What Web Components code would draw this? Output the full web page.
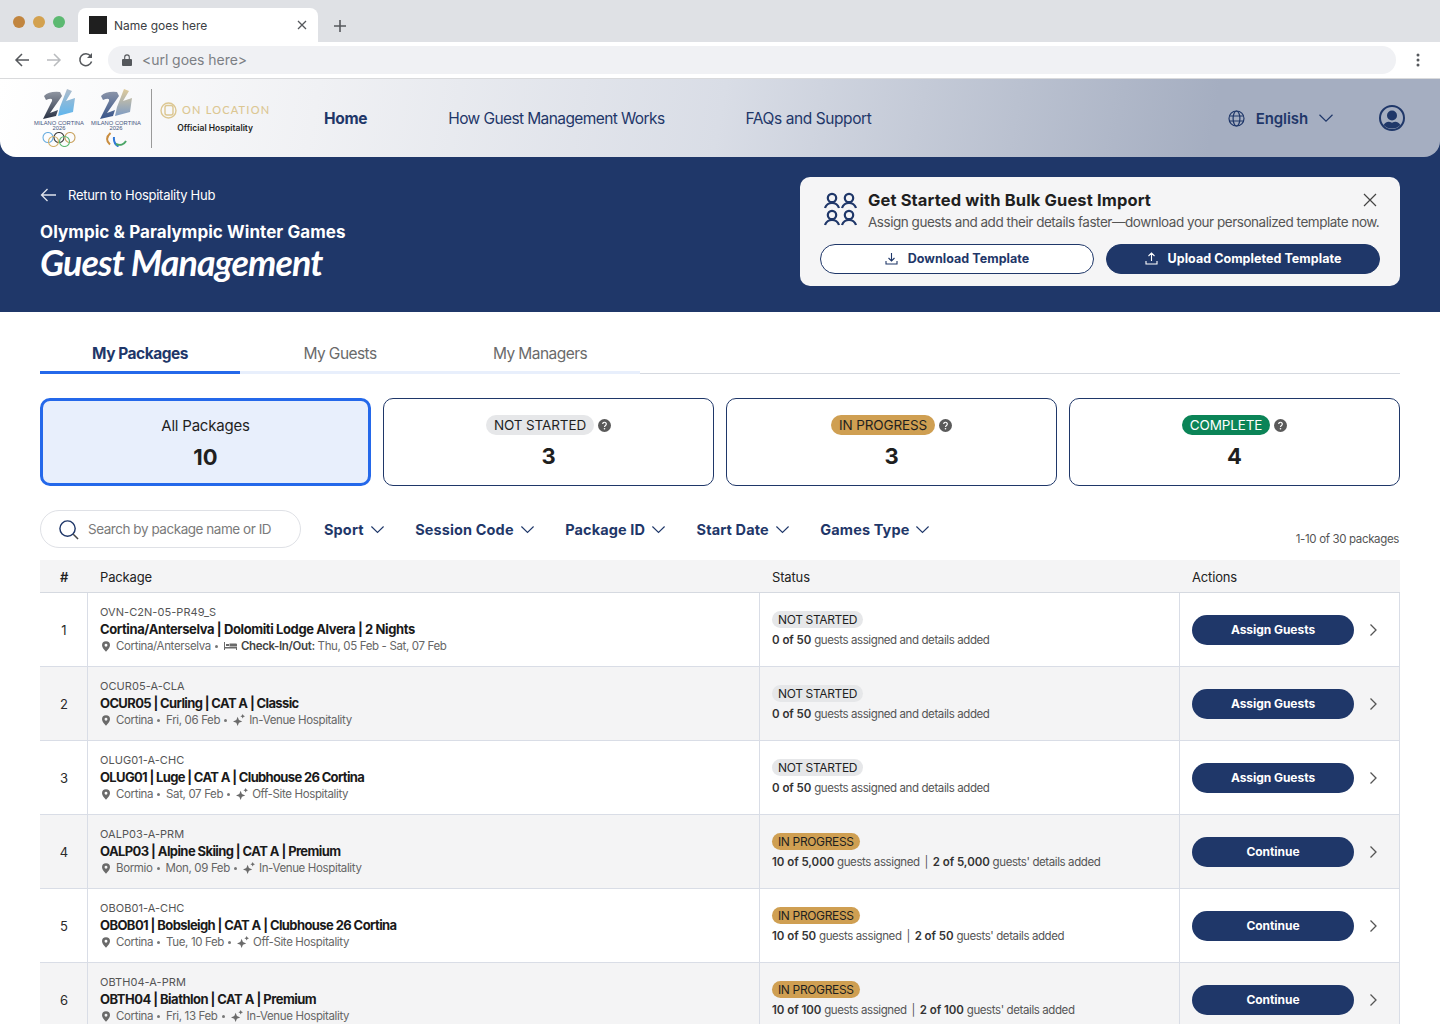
<!DOCTYPE html>
<html>
<head>
<meta charset="utf-8">
<title>Guest Management</title>
<style>
  html, body { margin: 0; height: 1024px; overflow: hidden; background: #fff; }
  body { font-family: Inter, "Liberation Sans", sans-serif; color: #1f1f1f; }
  main { display: block; padding: 0 40px; }
</style>
</head>
<body>
<browser-chrome></browser-chrome>
<site-nav></site-nav>
<hero-banner></hero-banner>
<main>
  <package-tabs></package-tabs>
  <div id="cards" style="display:grid;grid-template-columns:repeat(4,1fr);gap:12px;margin-top:24px">
    <status-card selected label="All Packages" count="10"></status-card>
    <status-card label="NOT STARTED" count="3" kind="none"></status-card>
    <status-card label="IN PROGRESS" count="3" kind="prog"></status-card>
    <status-card label="COMPLETE" count="4" kind="done"></status-card>
  </div>
  <filter-bar></filter-bar>
  <package-table></package-table>
</main>

<script>
const chevron = (w, color) => `<svg width="${w}" height="${w}" viewBox="0 0 16 16" fill="none" stroke="${color}" stroke-width="1.2"><path d="M1.5 4.8 8 11.2l6.5-6.4"/></svg>`;

class BrowserChrome extends HTMLElement {
  constructor() {
    super();
    this.attachShadow({mode: 'open'}).innerHTML = `
      <style>
        :host { display: block; font-family: Inter, sans-serif; }
        .strip { height: 42px; background: #dfe1e5; display: flex; align-items: flex-end; padding-left: 13px; }
        .dots { display: flex; gap: 8px; align-self: flex-start; margin-top: 16px; }
        .dots i { width: 12px; height: 12px; border-radius: 50%; display: block; }
        .tab { width: 240px; height: 34px; margin-left: 13px; background: #fff; border-radius: 8px 8px 0 0; display: flex; align-items: center; padding: 0 11px; box-sizing: border-box; font-size: 12px; color: #3c4043; }
        .fav { width: 18px; height: 18px; background: #1f1f1f; margin-right: 7px; }
        .tab span { flex: 1; }
        .plus { margin: 0 0 10px 16px; }
        .bar { height: 36px; display: flex; align-items: center; padding-left: 14px; border-bottom: 1px solid #d9dadc; background: #fff; }
        .bar svg { display: block; }
        .nav { display: flex; gap: 16px; width: 94px; }
        .url { width: 1288px; height: 28px; background: #f0f1f4; border-radius: 14px; display: flex; align-items: center; padding: 0 0 1px 14px; box-sizing: border-box; font-size: 14px; color: #7c7f84; gap: 10px; letter-spacing: -.05px; }
        .more { margin-left: 20px; }
      </style>
      <div class="strip">
        <div class="dots"><i style="background:#c1853f"></i><i style="background:#d3a14f"></i><i style="background:#5cb971"></i></div>
        <div class="tab"><div class="fav"></div><span>Name goes here</span>
          <svg width="10" height="10" viewBox="0 0 10 10" stroke="#55585c" stroke-width="1.3"><path d="M1 1l8 8M9 1 1 9"/></svg></div>
        <svg class="plus" width="12" height="12" viewBox="0 0 12 12" stroke="#55585c" stroke-width="1.6"><path d="M6 0v12M0 6h12"/></svg>
      </div>
      <div class="bar">
        <div class="nav">
          <svg width="16" height="16" viewBox="0 0 16 16" fill="none" stroke="#55585c" stroke-width="1.5"><path d="M15 8H2M8 2 2 8l6 6"/></svg>
          <svg width="16" height="16" viewBox="0 0 16 16" fill="none" stroke="#b9bbbe" stroke-width="1.5"><path d="M1 8h13M8 2l6 6-6 6"/></svg>
          <svg width="16" height="16" viewBox="0 0 16 16" fill="none" stroke="#55585c" stroke-width="1.5"><path d="M13.6 9.6A6 6 0 1 1 12.6 4"/><path d="M14 1v5H9z" fill="#55585c" stroke="none"/></svg>
        </div>
        <div class="url">
          <svg width="10" height="12" viewBox="0 0 10 12"><path d="M1 5h8a1 1 0 0 1 1 1v5a1 1 0 0 1-1 1H1a1 1 0 0 1-1-1V6a1 1 0 0 1 1-1z" fill="#55585c"/><path d="M2.7 5V3.200a2.300 2.300 0 0 1 4.600 0V5" fill="none" stroke="#55585c" stroke-width="1.100"/></svg>
          <span>&lt;url goes here&gt;</span>
        </div>
        <svg class="more" width="4" height="14" viewBox="0 0 4 14" fill="#55585c"><circle cx="2" cy="2" r="1.5"/><circle cx="2" cy="7" r="1.5"/><circle cx="2" cy="12" r="1.5"/></svg>
      </div>`;
  }
}
customElements.define('browser-chrome', BrowserChrome);

class GamesLogo extends HTMLElement {
  constructor() {
    super();
    const para = this.hasAttribute('para');
    const id = para ? 'p' : 'o';
    const grad = para
      ? [['#8a94a8', '#37548a'], ['#dfcb9b', '#7f9cc4']]
      : [['#8f95a1', '#2a3345'], ['#aebccb', '#5fb6ee']];
    const mark = para
      ? `<svg width="22" height="15" viewBox="0 0 22 15" fill="none" stroke-width="2"><path d="M5.500 1C1 5 1 9 5 12.500" stroke="#c98d3f"/><path d="M9 5c-.5 4 1 7.500 4.500 9.500" stroke="#2f78d8"/><path d="M11 12c4 1.800 8 .5 10-3" stroke="#4aa566"/></svg>`
      : `<svg width="34" height="15" viewBox="0 0 34 15" fill="none" stroke-width="1.100"><circle cx="6" cy="5.500" r="5" stroke="#6aaee0"/><circle cx="17" cy="5.500" r="5" stroke="#3a3a3a"/><circle cx="28" cy="5.500" r="5" stroke="#c9a35f"/><circle cx="11.500" cy="9.500" r="5" stroke="#d4b26b"/><circle cx="22.500" cy="9.500" r="5" stroke="#5cb971"/></svg>`;
    this.attachShadow({mode: 'open'}).innerHTML = `
      <style>
        :host { display: flex; flex-direction: column; align-items: center; width: 54px; }
        svg { display: block; }
        .name { font: 500 5.800px/4.800px "Liberation Sans", sans-serif; color: #46557d; white-space: nowrap; text-align: center; margin: 2px 0; height: 9px; }
      </style>
      <svg width="32" height="30" viewBox="0 0 32 30">
        <defs>
          <linearGradient id="${id}a" x1="0" y1="0" x2="0" y2="1"><stop offset="0" stop-color="${grad[0][0]}"/><stop offset="1" stop-color="${grad[0][1]}"/></linearGradient>
          <linearGradient id="${id}b" x1="0" y1="0" x2="0" y2="1"><stop offset="0" stop-color="${grad[1][0]}"/><stop offset="1" stop-color="${grad[1][1]}"/></linearGradient>
        </defs>
        <path d="M1 7Q6 2 17 3L19 7 7 24 15 21 13 27 0 30 9 12Q10 8 3 11Z" fill="url(#${id}a)"/>
        <path d="M24 0 29 2 23 12 32 9 30 23 15 27 17 18Z" fill="url(#${id}b)"/>
      </svg>
      <div class="name">MILANO CORTINA<br>2026</div>
      ${mark}`;
  }
}
customElements.define('games-logo', GamesLogo);

class SiteNav extends HTMLElement {
  constructor() {
    super();
    this.attachShadow({mode: 'open'}).innerHTML = `
      <style>
        :host { display: block; background: #1f3769; font-family: Inter, sans-serif; }
        .wrap { height: 78px; box-sizing: border-box; border-radius: 0 0 16px 16px; background: linear-gradient(100deg, #fff 0%, #f0f1f4 22%, #d9dde6 50%, #a5aec1 84%, #a5aec1 100%); display: flex; align-items: center; padding: 0 35px 0 32px; color: #1f3769; }
        .logos { display: flex; align-items: center; width: 292px; }
        .logos games-logo + games-logo { margin-left: 3px; }
        .rule { width: 1px; height: 59px; background: #9a9a9a; margin: 0 8px 0 8px; }
        .ol { display: flex; flex-direction: column; align-items: center; margin-top: -2px; }
        .ol .top { display: flex; align-items: center; gap: 5px; color: #dcc792; font: 500 11px/14px Lato, sans-serif; letter-spacing: 1.200px; white-space: nowrap; }
        .ol .sub { font: 600 8.500px/10px Inter, sans-serif; color: #1f1f1f; margin-top: 4px; }
        a { font-size: 15.500px; letter-spacing: -.6px; white-space: nowrap; }
        .home { font-weight: 700; margin-right: 81px; letter-spacing: -.3px; }
        .how { margin-right: 81px; }
        .faq { letter-spacing: -.42px; }
        .lang { margin-left: auto; display: flex; align-items: center; font-weight: 600; font-size: 15px; letter-spacing: -.1px; }
        .lang svg:first-child { margin-right: 11px; }
        .lang span { margin-right: 10px; }
        .user { margin-left: 45px; display: block; }
      </style>
      <div class="wrap">
        <div class="logos">
          <games-logo></games-logo><games-logo para></games-logo>
          <div class="rule"></div>
          <div class="ol">
            <div class="top">
              <svg width="17" height="17" viewBox="0 0 17 17" fill="none" stroke="#dcc792" stroke-width="1.400"><circle cx="8.500" cy="8.500" r="7.500"/><rect x="5" y="3.500" width="8" height="9.500" rx="2"/></svg>
              ON LOCATION
            </div>
            <div class="sub">Official Hospitality</div>
          </div>
        </div>
        <a class="home">Home</a>
        <a class="how">How Guest Management Works</a>
        <a class="faq">FAQs and Support</a>
        <div class="lang">
          <svg width="17" height="17" viewBox="0 0 17 17" fill="none" stroke="#1f3769" stroke-width="1.200"><circle cx="8.500" cy="8.500" r="7.500"/><ellipse cx="8.500" cy="8.500" rx="3.400" ry="7.500"/><path d="M1.500 6h14M1.500 11h14"/></svg>
          <span>English</span>
          ${chevron(16, '#1f3769')}
        </div>
        <svg class="user" width="26" height="26" viewBox="0 0 26 26"><circle cx="13" cy="13" r="12" fill="none" stroke="#1f3769" stroke-width="2"/><circle cx="13" cy="10.500" r="5" fill="#1f3769"/><path d="M4.500 20c3-4 5.500-3.500 8.500-2.200 3-1.300 5.500-1.800 8.500 2.200a12 12 0 0 1-17 0z" fill="#1f3769"/></svg>
      </div>`;
  }
}
customElements.define('site-nav', SiteNav);

class ImportCard extends HTMLElement {
  constructor() {
    super();
    const person = (x, y) => `<g transform="translate(${x} ${y})"><circle cx="8" cy="5" r="4.200"/><path d="M1 15c1-3 3-5 7-5s6 2 7 5"/></g>`;
    this.attachShadow({mode: 'open'}).innerHTML = `
      <style>
        :host { display: block; width: 600px; height: 109px; box-sizing: border-box; background: #f5f5f6; border-radius: 10px; padding: 12px 20px 0; position: relative; font-family: Inter, sans-serif; }
        .head { display: flex; gap: 11px; height: 55px; }
        .head svg { flex: none; margin: 3px 0 0 4px; }
        h3 { margin: 0; font-size: 16.500px; line-height: 22px; font-weight: 700; color: #1f1f1f; letter-spacing: .13px; white-space: nowrap; }
        p { margin: 1px 0 0; font-size: 13.500px; line-height: 20px; color: #555; letter-spacing: -.47px; white-space: nowrap; }
        .close { position: absolute; top: 16px; right: 23px; }
        .btns { display: grid; grid-template-columns: 1fr 1fr; gap: 12px; }
        button { height: 30px; border-radius: 15px; border: 1px solid #1f3769; font: 700 12.500px Inter, sans-serif; letter-spacing: .05px; display: flex; align-items: center; justify-content: center; gap: 10px; padding: 0 0 1px; }
        .a { background: #fff; color: #1f3769; }
        .b { background: #1f3769; color: #fff; }
      </style>
      <div class="head">
        <svg width="33" height="35" viewBox="0 0 33 35" fill="none" stroke="#1f3769" stroke-width="2.200">${person(0, 1)}${person(17, 1)}${person(0, 18)}${person(17, 18)}</svg>
        <div><h3>Get Started with Bulk Guest Import</h3><p>Assign guests and add their details faster—download your personalized template now.</p></div>
      </div>
      <svg class="close" width="14" height="14" viewBox="0 0 14 14" stroke="#444" stroke-width="1.200"><path d="M1 1l12 12M13 1 1 13"/></svg>
      <div class="btns">
        <button class="a"><svg width="13" height="13" viewBox="0 0 13 13" fill="none" stroke="#1f3769" stroke-width="1.100"><path d="M6.500 1v8M3.500 6l3 3 3-3M1 9v3h11V9"/></svg>Download Template</button>
        <button class="b"><svg width="13" height="13" viewBox="0 0 13 13" fill="none" stroke="#fff" stroke-width="1.100"><path d="M6.500 9V1M3.500 4l3-3 3 3M1 9v3h11V9"/></svg>Upload Completed Template</button>
      </div>`;
  }
}
customElements.define('import-card', ImportCard);

class HeroBanner extends HTMLElement {
  constructor() {
    super();
    this.attachShadow({mode: 'open'}).innerHTML = `
      <style>
        :host { display: flex; height: 155px; background: #1f3769; color: #fff; padding: 20px 40px 0; box-sizing: border-box; justify-content: space-between; font-family: Inter, sans-serif; }
        .back { display: flex; align-items: center; gap: 11px; font-size: 13px; line-height: 18px; letter-spacing: -.27px; margin-top: 9px; }
        h2 { margin: 18px 0 0; font-size: 17px; line-height: 21px; font-weight: 700; letter-spacing: .07px; }
        h1 { margin: 2px 0 0; font: italic 700 35.800px/36px Lato, sans-serif; letter-spacing: -.9px; white-space: nowrap; }
      </style>
      <div>
        <div class="back"><svg width="17" height="14" viewBox="0 0 17 14" fill="none" stroke="#dfe3ec" stroke-width="1.300"><path d="M16 7H1.500M7.500 1 1.500 7l6 6"/></svg>Return to Hospitality Hub</div>
        <h2>Olympic &amp; Paralympic Winter Games</h2>
        <h1>Guest Management</h1>
      </div>
      <import-card></import-card>`;
  }
}
customElements.define('hero-banner', HeroBanner);

class PackageTabs extends HTMLElement {
  constructor() {
    super();
    this.attachShadow({mode: 'open'}).innerHTML = `
      <style>
        :host { display: flex; height: 62px; box-sizing: border-box; border-bottom: 1px solid #d5d9e0; font-family: Inter, sans-serif; }
        div { width: 200px; height: 62px; box-sizing: border-box; padding-top: 31px; text-align: center; font-size: 15.500px; line-height: 22px; color: #6a6a6a; letter-spacing: -.55px; border-bottom: 3px solid #e8effc; }
        .on { color: #1f3769; font-weight: 700; letter-spacing: -.5px; border-bottom-color: #2468ea; }
      </style>
      <div class="on">My Packages</div><div>My Guests</div><div>My Managers</div>`;
  }
}
customElements.define('package-tabs', PackageTabs);

class StatusBadge extends HTMLElement {
  constructor() {
    super();
    const k = this.getAttribute('kind');
    const colors = {none: ['#e6e7e9', '#1f1f1f'], prog: ['#cf9f52', '#1f1f1f'], done: ['#0b8457', '#fff']}[k];
    this.attachShadow({mode: 'open'}).innerHTML = `
      <style>
        :host { display: inline-block; background: ${colors[0]}; color: ${colors[1]}; border-radius: 10px; font-family: Inter, sans-serif; white-space: nowrap; }
        span { display: block; }
      </style><span><slot></slot></span>`;
  }
}
customElements.define('status-badge', StatusBadge);

class StatusCard extends HTMLElement {
  constructor() {
    super();
    const label = this.getAttribute('label');
    const kind = this.getAttribute('kind');
    const sel = this.hasAttribute('selected');
    const top = kind
      ? `<div class="top"><status-badge kind="${kind}" style="font-size:13.500px;line-height:20px;padding:0 8px;letter-spacing:-.12px">${label}</status-badge>
           <svg width="13" height="13" viewBox="0 0 13 13"><circle cx="6.500" cy="6.500" r="6.500" fill="#5a5a5a"/><path d="M4.700 5a1.800 1.700 0 1 1 2.800 1.400c-.7.500-1 .8-1 1.500" fill="none" stroke="#fff" stroke-width="1.200"/><circle cx="6.500" cy="9.800" r=".8" fill="#fff"/></svg></div>`
      : `<div class="top all">${label}</div>`;
    this.attachShadow({mode: 'open'}).innerHTML = `
      <style>
        :host { display: flex; flex-direction: column; align-items: center; height: 88px; box-sizing: border-box; border: 1px solid #1f3769; border-radius: 10px; padding-top: 16px; font-family: Inter, sans-serif; ${sel ? 'border: 3px solid #2468ea; background: #e8effc; padding-top: 14px;' : ''} }
        .top { display: flex; align-items: center; gap: 4px; height: 20px; }
        .all { font-size: 15px; letter-spacing: -.2px; color: #1f1f1f; height: 21px; }
        .n { font-size: 22px; line-height: 26px; font-weight: 700; margin-top: 8px; color: #1f1f1f; }
      </style>${top}<div class="n">${this.getAttribute('count')}</div>`;
  }
}
customElements.define('status-card', StatusCard);

class FilterBar extends HTMLElement {
  constructor() {
    super();
    const f = t => `<div class="f">${t}${chevron(15, '#1f3769')}</div>`;
    this.attachShadow({mode: 'open'}).innerHTML = `
      <style>
        :host { display: flex; align-items: center; height: 38px; margin-top: 24px; position: relative; font-family: Inter, sans-serif; }
        .search { width: 261px; height: 38px; box-sizing: border-box; border: 1px solid #dfe1e6; border-radius: 19px; display: flex; align-items: center; padding-left: 17px; gap: 9px; font-size: 13.500px; color: #7a7a7a; letter-spacing: -.46px; white-space: nowrap; margin-right: 23px; }
        .f { display: flex; align-items: center; gap: 6px; font-size: 14.500px; font-weight: 700; color: #1f3769; letter-spacing: .12px; margin-right: 30.500px; white-space: nowrap; }
        .count { position: absolute; right: 1px; top: 21px; font-size: 11.500px; line-height: 16px; color: #555; letter-spacing: -.35px; }
      </style>
      <div class="search"><svg width="21" height="21" viewBox="0 0 22 22" fill="none" stroke="#1f3769" stroke-width="1.500"><circle cx="10" cy="10" r="8"/><path d="M16 16l5 5" stroke="#444"/></svg>Search by package name or ID</div>
      ${['Sport', 'Session Code', 'Package ID', 'Start Date', 'Games Type'].map(f).join('')}
      <div class="count">1-10 of 30 packages</div>`;
  }
}
customElements.define('filter-bar', FilterBar);

const PIN = `<svg width="8" height="11" viewBox="0 0 10 13" fill="#6a6a6a"><path fill-rule="evenodd" d="M5 0a5 5 0 0 1 5 5c0 3-3 6-5 8-2-2-5-5-5-8a5 5 0 0 1 5-5zm0 3.200a1.800 1.800 0 1 0 0 3.600 1.800 1.800 0 0 0 0-3.600z"/></svg>`;
const BED = `<svg width="13" height="10" viewBox="0 0 13 10" fill="#6a6a6a"><path d="M0 1h1v5h12v3h-1V7.500H1V9H0zM2 3h3v2H2zM5.500 2.500H12a1 1 0 0 1 1 1V5.500H5.500z"/></svg>`;
const SPARK = `<svg width="12" height="12" viewBox="0 0 13 13" fill="#6a6a6a"><path d="M5 3l1.400 3.600L10 8l-3.600 1.400L5 13 3.600 9.400 0 8l3.600-1.400zM10.500 0l.8 1.700L13 2.500l-1.700.8-.8 1.700-.8-1.700L8 2.500l1.700-.8z"/></svg>`;

class PackageRow extends HTMLElement {
  constructor() {
    super();
    const a = n => this.getAttribute(n);
    const k = a('kind');
    const extra = a('extra') === 'bed'
      ? `${BED}<span><b>Check-In/Out:</b> ${a('hosp')}</span>`
      : `${SPARK}<span>${a('hosp')}</span>`;
    this.attachShadow({mode: 'open'}).innerHTML = `
      <style>
        :host { display: grid; grid-template-columns: 47px 672px 420px 221px; height: 74px; box-sizing: border-box; border-bottom: 1px solid #d9dde6; font-family: Inter, sans-serif; background: ${a('n') % 2 ? '#fff' : '#f4f4f5'}; }
        .c { box-sizing: border-box; border-left: 1px solid #d9dde6; padding-left: 12px; display: flex; flex-direction: column; justify-content: center; min-width: 0; }
        .c:last-child { border-right: 1px solid #d9dde6; }
        .num { align-items: center; font-size: 13px; border-left: 0; padding: 0 0 0 1px; color: #2a2a2a; }
        .code { font-size: 11px; line-height: 14px; color: #555; letter-spacing: .05px; }
        .title { font-size: 13px; line-height: 18px; font-weight: 700; color: #1a1a1a; letter-spacing: ${a('track')}px; white-space: nowrap; margin-top: 1px; }
        .meta { display: flex; align-items: center; gap: 4px; font-size: 11.500px; line-height: 16px; color: #666; letter-spacing: -.36px; white-space: nowrap; padding-left: 2px; }
        .meta svg:first-child { margin-right: 2px; }
        .meta i { width: 3px; height: 3px; border-radius: 50%; background: #777; margin-right: 2px; }
        .meta b { font-weight: 600; color: #444; }
        .st { gap: 4px; padding-top: 1px; }
        status-badge { align-self: flex-start; font-size: 12px; line-height: 17px; padding: 0 6px; letter-spacing: -.35px; }
        .txt { font-size: 11.500px; line-height: 17px; color: #555; letter-spacing: -.4px; white-space: nowrap; }
        .txt b { font-weight: 600; color: #333; letter-spacing: -.05px; }
        .txt em { font-style: normal; margin: 0 2px; }
        .act { flex-direction: row; align-items: center; justify-content: flex-start; }
        button { width: 162px; height: 30px; border: 0; border-radius: 15px; background: #1f3769; color: #fff; font: 700 12px Inter, sans-serif; letter-spacing: -.05px; padding: 0; }
        .act svg { margin-left: 15px; }
      </style>
      <div class="c num">${a('n')}</div>
      <div class="c">
        <div class="code">${a('code')}</div>
        <div class="title">${a('title')}</div>
        <div class="meta">${PIN}<span>${a('place')}</span><i></i>${a('extra') === 'bed' ? '' : `<span>${a('date')}</span><i></i>`}${extra}</div>
      </div>
      <div class="c st">
        <status-badge kind="${k}">${k === 'none' ? 'NOT STARTED' : 'IN PROGRESS'}</status-badge>
        <div class="txt">${a('status')}</div>
      </div>
      <div class="c act">
        <button>${k === 'none' ? 'Assign Guests' : 'Continue'}</button>
        <svg width="9" height="14" viewBox="0 0 9 14" fill="none" stroke="#555" stroke-width="1.300"><path d="M1.500 1.500 7 7l-5.500 5.500"/></svg>
      </div>`;
  }
}
customElements.define('package-row', PackageRow);

class PackageTable extends HTMLElement {
  constructor() {
    super();
    const ns = '<b>0 of 50</b> guests assigned and details added';
    const prog = n => `<b>10 of ${n}</b> guests assigned <em>|</em> <b>2 of ${n}</b> guests' details added`;
    const rows = [
      ['OVN-C2N-05-PR49_S', 'Cortina/Anterselva | Dolomiti Lodge Alvera | 2 Nights', 'Cortina/Anterselva', '', 'Thu, 05 Feb - Sat, 07 Feb', 'none', ns, 'bed', -.39],
      ['OCUR05-A-CLA', 'OCUR05 | Curling | CAT A | Classic', 'Cortina', 'Fri, 06 Feb', 'In-Venue Hospitality', 'none', ns, '', -.63],
      ['OLUG01-A-CHC', 'OLUG01 | Luge | CAT A | Clubhouse 26 Cortina', 'Cortina', 'Sat, 07 Feb', 'Off-Site Hospitality', 'none', ns, '', -.66],
      ['OALP03-A-PRM', 'OALP03 | Alpine Skiing | CAT A | Premium', 'Bormio', 'Mon, 09 Feb', 'In-Venue Hospitality', 'prog', prog('5,000'), '', -.59],
      ['OBOB01-A-CHC', 'OBOB01 | Bobsleigh | CAT A | Clubhouse 26 Cortina', 'Cortina', 'Tue, 10 Feb', 'Off-Site Hospitality', 'prog', prog('50'), '', -.59],
      ['OBTH04-A-PRM', 'OBTH04 | Biathlon | CAT A | Premium', 'Cortina', 'Fri, 13 Feb', 'In-Venue Hospitality', 'prog', prog('100'), '', -.53],
    ];
    const esc = s => s.replace(/"/g, '&quot;');
    this.attachShadow({mode: 'open'}).innerHTML = `
      <style>
        :host { display: block; margin-top: 12px; font-family: Inter, sans-serif; }
        .head { display: grid; grid-template-columns: 47px 672px 420px 221px; height: 33px; background: #f4f4f5; border-bottom: 1px solid #d5d9e0; box-sizing: border-box; font-size: 13px; line-height: 34px; color: #222; letter-spacing: -.15px; }
        .head div { padding-left: 13px; }
        .head div:first-child { padding: 0 0 0 1px; text-align: center; font-weight: 600; }
      </style>
      <div class="head"><div>#</div><div>Package</div><div>Status</div><div>Actions</div></div>
      ${rows.map((r, i) => `<package-row n="${i + 1}" code="${r[0]}" title="${r[1]}" place="${r[2]}" date="${r[3]}" hosp="${r[4]}" kind="${r[5]}" status="${esc(r[6])}" extra="${r[7]}" track="${r[8]}"></package-row>`).join('')}`;
  }
}
customElements.define('package-table', PackageTable);
</script>
</body>
</html>
